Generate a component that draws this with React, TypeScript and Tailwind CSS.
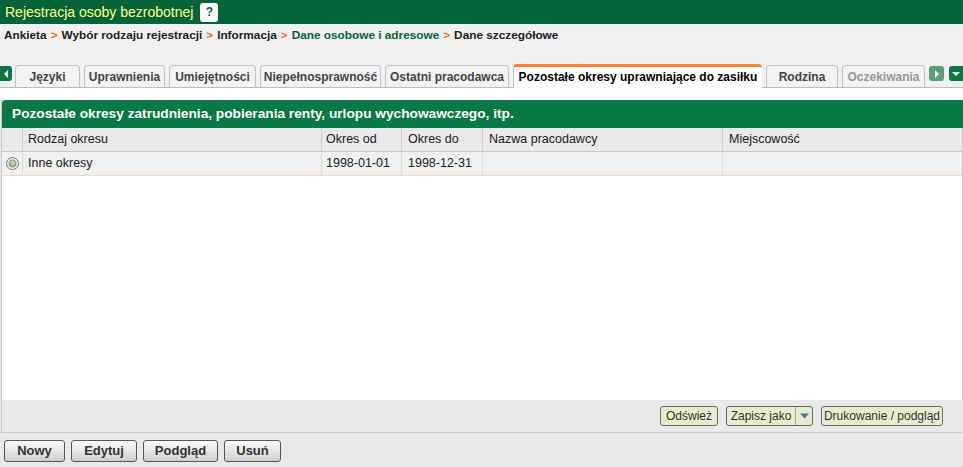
import React from "react";

const tabs = [
  { label: "Języki", w: "w-[65px]" },
  { label: "Uprawnienia", w: "w-[81px]" },
  { label: "Umiejętności", w: "w-[87px]" },
  { label: "Niepełnosprawność", w: "w-[121px]" },
  { label: "Ostatni pracodawca", w: "w-[124px]" },
];

function Tab({ label, w, dim }: { label: string; w: string; dim?: boolean }) {
  return (
    <div
      className={`${w} h-[22px] shrink-0 flex items-center justify-center border border-b-0 border-[#c4c4c4] rounded-t-[4px] bg-[#f2f2f2] text-[12px] font-bold ${dim ? "text-[#9a9a9a]" : "text-[#444]"}`}
    >
      {label}
    </div>
  );
}

function Btn({ label, w }: { label: string; w: string }) {
  return (
    <div
      className={`${w} h-[22px] flex items-center justify-center rounded-[3px] border border-[#555] bg-gradient-to-b from-[#fafafa] via-[#e6e6e6] to-[#cfcfcf] text-[13px] font-bold text-[#333]`}
    >
      {label}
    </div>
  );
}

export default function App() {
  return (
    <div className="w-[963px] h-[467px] bg-[#f0f0f0] flex flex-col overflow-hidden text-[#222]" style={{ fontFamily: '"Liberation Sans", Arial, sans-serif' }}>
      {/* Header */}
      <div className="h-[24px] shrink-0 bg-[#05643a] flex items-center pl-[5px]">
        <span className="text-[14px] text-[#ffff88]">Rejestracja osoby bezrobotnej</span>
        <div className="ml-[7px] w-[18px] h-[19px] bg-white rounded-[3px] flex items-center justify-center text-[#05643a] font-bold text-[12px]">?</div>
      </div>
      {/* Breadcrumb */}
      <div className="h-[24px] shrink-0 flex items-center pl-[4px] text-[11.8px] font-bold gap-[4px]">
        <span>Ankieta</span>
        <span className="text-[#f07020]">&gt;</span>
        <span>Wybór rodzaju rejestracji</span>
        <span className="text-[#f07020]">&gt;</span>
        <span>Informacja</span>
        <span className="text-[#f07020]">&gt;</span>
        <span className="text-[#05643a]">Dane osobowe i adresowe</span>
        <span className="text-[#f07020]">&gt;</span>
        <span>Dane szczegółowe</span>
      </div>
      <div className="h-[16px] shrink-0" />
      {/* Tabs */}
      <div className="h-[24px] shrink-0 flex items-end border-b border-[#bcbcbc] relative">
        <div className="self-start mt-[2px] w-[12px] h-[15px] bg-[#087844] rounded-r-[3px] flex items-center justify-center">
          <svg width="6" height="8" viewBox="0 0 6 8"><path d="M5 0 L1 4 L5 8 Z" fill="#fff" /></svg>
        </div>
        <div className="flex items-end gap-[4px] ml-[3px]">
          {tabs.map((t) => (
            <Tab key={t.label} label={t.label} w={t.w} />
          ))}
          <div className="w-[249px] h-[24px] shrink-0 flex items-center justify-center bg-white border-t-[3px] border-l border-l-[#c4c4c4] border-t-[#ff8030] rounded-t-[4px] text-[12px] font-bold text-black -mb-[1px] pb-[1px]">
            Pozostałe okresy uprawniające do zasiłku
          </div>
          <Tab label="Rodzina" w="w-[72px]" />
          <Tab label="Oczekiwania" w="w-[83px]" dim />
        </div>
        <div className="self-start mt-[2px] ml-[4px] w-[15px] h-[15px] bg-[#5a9e7a] rounded-[3px] flex items-center justify-center">
          <svg width="6" height="8" viewBox="0 0 6 8"><path d="M1 0 L5 4 L1 8 Z" fill="#fff" /></svg>
        </div>
        <div className="self-start mt-[2px] ml-[5px] w-[14px] h-[15px] bg-[#087844] rounded-l-[3px] flex items-center justify-center">
          <svg width="8" height="6" viewBox="0 0 8 6"><path d="M0 1 L8 1 L4 5 Z" fill="#fff" /></svg>
        </div>
      </div>
      {/* white gap */}
      <div className="h-[12px] shrink-0 bg-white" />
      {/* Panel */}
      <div className="flex-1 flex flex-col bg-[#e9e9e9]">
        <div className="flex-1 ml-[1px] flex flex-col border-l border-[#c8c8c8] border-b border-b-[#cfcfcf]">
          <div className="h-[28px] shrink-0 bg-[#087844] rounded-tl-[4px] flex items-center pl-[10px] text-white font-bold text-[13.7px]">
            Pozostałe okresy zatrudnienia, pobierania renty, urlopu wychowawczego, itp.
          </div>
          <div className="flex-1 bg-white flex flex-col border-r border-[#c8c8c8]">
            <div className="h-[24px] shrink-0 flex bg-[#e9e9e9] border-b border-[#cacaca] text-[12.5px] text-[#222]">
              <div className="w-[21px] border-r border-[#d0d0d0]" />
              <div className="w-[299px] pl-[5px] flex items-center border-r border-[#d0d0d0]">Rodzaj okresu</div>
              <div className="w-[80px] pl-[4px] flex items-center border-r border-[#d0d0d0]">Okres od</div>
              <div className="w-[81px] pl-[6px] flex items-center border-r border-[#d0d0d0]">Okres do</div>
              <div className="w-[240px] pl-[6px] flex items-center border-r border-[#d0d0d0]">Nazwa pracodawcy</div>
              <div className="flex-1 pl-[6px] flex items-center">Miejscowość</div>
            </div>
            <div className="h-[24px] shrink-0 flex bg-[#f0f0f0] border-b border-[#ecdcc6] text-[12.5px] text-[#222]">
              <div className="w-[21px] flex items-center justify-center border-r border-[#e8dcc8]">
                <svg width="13" height="13" viewBox="0 0 13 13">
                  <circle cx="6.5" cy="6.5" r="6" fill="#eeeeee" stroke="#7a7a7a" />
                  <circle cx="6.5" cy="6.5" r="4" fill="#8faa80" />
                  <circle cx="6.5" cy="5.8" r="2.3" fill="#b9cfa8" />
                </svg>
              </div>
              <div className="w-[299px] pl-[5px] flex items-center border-r border-[#e8dcc8]">Inne okresy</div>
              <div className="w-[80px] pl-[4px] flex items-center border-r border-[#e8dcc8]">1998-01-01</div>
              <div className="w-[81px] pl-[6px] flex items-center border-r border-[#e8dcc8]">1998-12-31</div>
              <div className="w-[240px] border-r border-[#e8dcc8]" />
              <div className="flex-1" />
            </div>
            <div className="flex-1" />
          </div>
          <div className="h-[32px] shrink-0 bg-[#e9e9e9] flex items-center justify-end gap-[8px] pr-[20px] text-[12px] text-[#333]">
            <div className="w-[58px] h-[20px] flex items-center justify-center rounded-[3px] border border-[#6a6a6a] bg-[#e3efcc]">Odśwież</div>
            <div className="w-[87px] h-[20px] flex items-center rounded-[3px] border border-[#6a6a6a] bg-[#e3efcc]">
              <div className="flex-1 text-center border-r border-[#9ab070] h-full flex items-center justify-center">Zapisz jako</div>
              <div className="w-[16px] flex items-center justify-center">
                <svg width="9" height="6" viewBox="0 0 9 6"><path d="M0 0.5 L9 0.5 L4.5 5.5 Z" fill="#5577aa" /></svg>
              </div>
            </div>
            <div className="w-[122px] h-[20px] flex items-center justify-center rounded-[3px] border border-[#6a6a6a] bg-[#e3efcc]">Drukowanie / podgląd</div>
          </div>
        </div>
        <div className="h-[34px] shrink-0 flex items-center gap-[6px] pl-[4px] pt-[2px]">
          <Btn label="Nowy" w="w-[61px]" />
          <Btn label="Edytuj" w="w-[66px]" />
          <Btn label="Podgląd" w="w-[75px]" />
          <Btn label="Usuń" w="w-[57px]" />
        </div>
      </div>
    </div>
  );
}
